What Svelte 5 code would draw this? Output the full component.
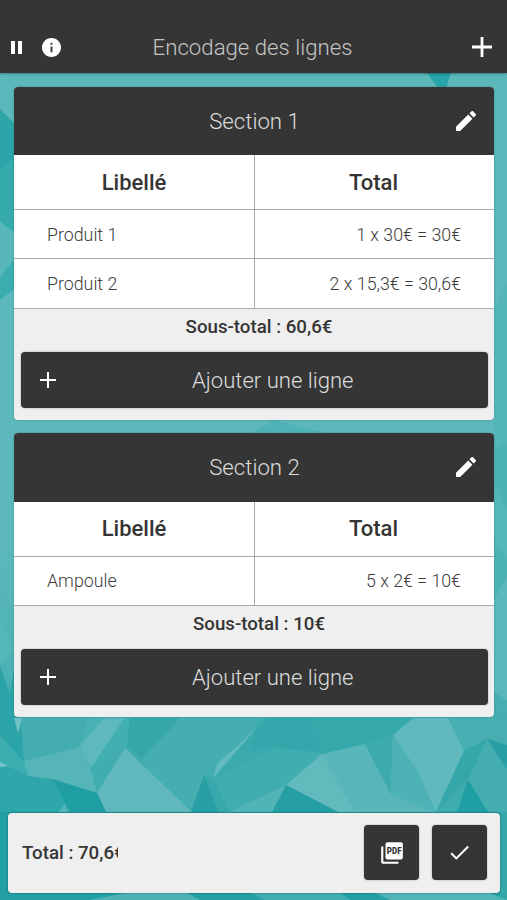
<script lang="ts">
    const sections = [
        {
            name: "Section 1",
            lines: [
                { label: "Produit 1", total: "1 x 30€ = 30€" },
                { label: "Produit 2", total: "2 x 15,3€ = 30,6€" }
            ],
            subtotal: "60,6€"
        },
        {
            name: "Section 2",
            lines: [{ label: "Ampoule", total: "5 x 2€ = 10€" }],
            subtotal: "10€"
        }
    ];

    // Low-poly facets of the page background
    const facets = [
        { points: "427,73 451,73 446,88 438,88", fill: "#27a5a9" },
        { points: "0,109 14,123 14,232 0,221", fill: "#2ca5a9" },
        { points: "0,170 14,158 14,232 0,221", fill: "#35abad" },
        { points: "0,221 14,234 14,263 0,277", fill: "#57b7ba" },
        { points: "0,277 14,260 14,289 0,300", fill: "#3badb0" },
        { points: "250,434 274,420 302,427 330,434", fill: "#4db3b6" },
        { points: "494,310 507,280 507,442 494,450", fill: "#53b5b8" },
        { points: "494,450 507,442 507,690 494,680", fill: "#4bb2b4" },
        { points: "494,480 507,510 507,560 494,540", fill: "#55b6b9" },
        { points: "494,600 507,575 507,700 494,692", fill: "#5ab8bb" },
        { points: "0,614 0,665 14,650", fill: "#55b6b9" },
        { points: "0,718 507,718 507,812 0,812", fill: "#3eacaf" },
        { points: "0,666 14,705 24,762 0,735", fill: "#2ba4a8" },
        { points: "14,668 20,718 24,762 8,705", fill: "#2ba3a7" },
        { points: "14,718 22,718 18,733", fill: "#74c1c4" },
        { points: "22,718 88,718 79,747 24,761", fill: "#43adb0" },
        { points: "88,718 115,718 79,747", fill: "#4ab2b4" },
        { points: "104,718 125,718 91,768 79,747", fill: "#5eb9bc" },
        { points: "125,718 180,718 141,759 125,748 91,768", fill: "#42afb1" },
        { points: "130,718 180,718 141,759 127,747", fill: "#35a6aa" },
        { points: "180,718 257,718 257,728 238,747 213,778 191,812 141,762", fill: "#45aeb1" },
        { points: "0,740 24,762 28,776 0,764", fill: "#3caeb1" },
        { points: "0,762 28,776 52,779 70,812 0,812", fill: "#2fa7aa" },
        { points: "0,762 8,766 0,767", fill: "#7ac5c8" },
        { points: "24,761 79,747 91,769 97,793 52,779 28,776", fill: "#55b5b8" },
        { points: "91,769 125,749 97,793", fill: "#42adb0" },
        { points: "125,748 192,812 106,812 97,793", fill: "#60b8bc" },
        { points: "52,779 97,793 106,812 70,812", fill: "#209fa3" },
        { points: "58,812 65,804 68,812", fill: "#55b6b9" },
        { points: "204,775 219,812 191,812", fill: "#289fa4" },
        { points: "255,732 318,718 322,753 278,748 213,778", fill: "#3baaae" },
        { points: "255,729 266,718 312,718 320,752 278,748 252,750", fill: "#33a7ab" },
        { points: "213,778 278,748 322,754 286,785 229,812", fill: "#40adb0" },
        { points: "213,778 204,775 219,812 229,812", fill: "#37a9ac" },
        { points: "257,727 235,748 217,764 213,778 234,754", fill: "#64bbbf" },
        { points: "313,718 369,718 410,718 393,735 365,744 322,754", fill: "#35a8ab" },
        { points: "322,754 365,744 391,794 436,812 338,812 286,785", fill: "#58b6b9" },
        { points: "322,754 355,812 338,812 286,785", fill: "#62babd" },
        { points: "365,744 393,735 391,794", fill: "#3cabae" },
        { points: "393,735 414,718 450,718 464,751 436,812 391,794", fill: "#60b9bc" },
        { points: "393,735 417,770 436,812 391,794", fill: "#4db2b5" },
        { points: "448,718 507,718 507,745 487,739 464,751", fill: "#47aeb1" },
        { points: "464,751 487,739 468,779 436,812", fill: "#35a7ab" },
        { points: "487,739 507,745 507,768 495,765", fill: "#279fa5" },
        { points: "487,739 507,770 507,812 487,812 468,780", fill: "#43adb0" },
        { points: "468,780 488,812 457,812", fill: "#1f9fa4" },
        { points: "286,785 338,812 272,812", fill: "#269fa4" },
        { points: "286,785 272,812 229,812", fill: "#50b3b6" },
        { points: "0,812 507,812 507,900 0,900", fill: "#22a0a4" },
        { points: "500,812 507,812 507,900 500,900", fill: "#34a7ab" },
        { points: "125,893 187,893 200,900 90,900", fill: "#4eb2b5" },
        { points: "250,893 340,893 350,900 265,900", fill: "#43aeb1" },
        { points: "375,893 490,893 507,900 390,900", fill: "#51b5b8" }
    ];
</script>

<div class="page">
    <svg class="backdrop" viewBox="0 0 507 900" aria-hidden="true">
        <defs>
            <linearGradient id="sea" x1="0" y1="0" x2="0" y2="1">
                <stop offset="0" stop-color="#5ab8bb" />
                <stop offset="0.6" stop-color="#5db8bc" />
                <stop offset="0.8" stop-color="#43aeb1" />
                <stop offset="1" stop-color="#2aa3a7" />
            </linearGradient>
        </defs>
        <rect width="507" height="900" fill="url(#sea)" />
        {#each facets as facet}
            <polygon points={facet.points} fill={facet.fill} />
        {/each}
    </svg>

    <header>
        <div class="status">
            <svg class="pause" viewBox="0 0 13 13"><path d="M1 0h4v13H1zM8 0h4v13H8z" /></svg>
            <svg class="info" viewBox="2 2 20 20">
                <path d="M12 2C6.48 2 2 6.48 2 12s4.48 10 10 10 10-4.48 10-10S17.52 2 12 2zm1 15h-2v-6h2v6zm0-8h-2V7h2v2z" />
            </svg>
        </div>
        <h1>Encodage des lignes</h1>
        <button class="icon-button" aria-label="Ajouter une section">
            <svg class="add" viewBox="0 0 20 20"><path d="M8.6 0h2.8v8.6H20v2.8h-8.6V20H8.6v-8.6H0V8.6h8.6z" /></svg>
        </button>
    </header>

    <main>
        {#each sections as section}
            <section>
                <div class="section-head">
                    <h2>{section.name}</h2>
                    <button class="icon-button" aria-label="Modifier">
                        <svg class="edit" viewBox="3 3 18 18">
                            <path d="M3 17.25V21h3.75L17.81 9.94l-3.75-3.75L3 17.25zM20.71 7.04c.39-.39.39-1.02 0-1.41l-2.34-2.34c-.39-.39-1.02-.39-1.41 0l-1.83 1.83 3.75 3.75 1.83-1.83z" />
                        </svg>
                    </button>
                </div>
                <div class="row titles">
                    <div class="cell">Libellé</div>
                    <div class="cell">Total</div>
                </div>
                {#each section.lines as line}
                    <div class="row">
                        <div class="cell">{line.label}</div>
                        <div class="cell amount">{line.total}</div>
                    </div>
                {/each}
                <p class="subtotal">Sous-total : {section.subtotal}</p>
                <button class="add-line">
                    <svg viewBox="0 0 16 16"><path d="M7 0h2v7h7v2H9v7H7V9H0V7h7z" /></svg>
                    <span>Ajouter une ligne</span>
                </button>
            </section>
        {/each}
    </main>

    <footer>
        <span class="total">Total : 70,6€</span>
        <div class="actions">
            <button class="square" aria-label="Exporter en PDF">
                <svg class="pdf" viewBox="0 0 24 24">
                    <path d="M4 6H2v14c0 1.1.9 2 2 2h14v-2H4z" />
                    <rect x="6" y="2" width="16" height="16" rx="2" />
                    <text x="14" y="12.7" text-anchor="middle" textLength="13.6" lengthAdjust="spacingAndGlyphs">PDF</text>
                </svg>
            </button>
            <button class="square" aria-label="Valider">
                <svg class="check" viewBox="3 5 19 14"><path d="M9 16.17 4.83 12l-1.42 1.41L9 19 21 7l-1.41-1.41z" /></svg>
            </button>
        </div>
    </footer>
</div>

<style>
    .page {
        position: relative;
        display: flex;
        flex-direction: column;
        width: 507px;
        height: 900px;
        overflow: hidden;
        box-sizing: border-box;
        padding-bottom: 7.5px;
        font-family: Roboto, sans-serif;
        color: #353535;
    }

    .backdrop {
        position: absolute;
        inset: 0;
        width: 100%;
        height: 100%;
    }

    header, main, footer {
        position: relative;
    }

    svg {
        display: block;
        fill: #fff;
    }

    button {
        border: none;
        padding: 0;
        font: inherit;
        background: none;
        cursor: pointer;
    }

    h1, h2 {
        margin: 0;
        font-size: 22.2px;
        font-weight: 300;
        color: #ddd;
        text-align: center;
        white-space: nowrap;
    }

    header {
        display: grid;
        grid-template-columns: 80px 1fr 80px;
        align-items: center;
        height: 73px;
        padding: 21px 15px 0 10px;
        box-sizing: border-box;
        background: #353535;
        box-shadow: 0 1px 2px rgba(0, 0, 0, 0.35);
    }

    header h1 {
        padding-left: 3px;
        color: #c4c4c4;
    }

    .status {
        display: flex;
        align-items: center;
        gap: 19px;
    }

    .pause {
        width: 13px;
        height: 13px;
    }

    .info {
        width: 19px;
        height: 19px;
    }

    .icon-button {
        justify-self: end;
    }

    .add {
        width: 20px;
        height: 20px;
    }

    main {
        flex: 1;
        padding: 13.5px 13px 0 14px;
    }

    section {
        margin-bottom: 13px;
        padding-bottom: 12.5px;
        border-radius: 4px;
        overflow: hidden;
        background: #efefef;
        box-shadow: 0 0 2px rgba(0, 0, 0, 0.25);
    }

    .section-head {
        display: grid;
        grid-template-columns: 60px 1fr 60px;
        align-items: center;
        height: 68.5px;
        padding: 0 18px 0 19px;
        background: #353535;
    }

    .section-head h2 {
        grid-column: 2;
    }

    .edit {
        width: 20px;
        height: 20px;
    }

    .row {
        display: grid;
        grid-template-columns: 241px 1fr;
        height: 49.3px;
        box-sizing: border-box;
        border-bottom: 1px solid #aaa;
        background: #fff;
        color: #3c3c3c;
        font-size: 17.8px;
        font-weight: 300;
    }

    .row.titles {
        height: 55px;
        color: #353535;
        font-size: 22px;
        font-weight: 500;
    }

    .cell {
        display: flex;
        align-items: center;
        padding: 0 33px;
    }

    .cell:first-child {
        border-right: 1px solid #aaa;
    }

    .titles .cell {
        justify-content: center;
    }

    .titles .cell:last-child {
        padding-right: 35px;
    }

    .amount {
        justify-content: flex-end;
    }

    .subtotal {
        margin: 0;
        padding: 7px 0 14px 10px;
        line-height: 22px;
        font-size: 18.7px;
        font-weight: 500;
        text-align: center;
    }

    .add-line {
        display: grid;
        grid-template-columns: 20px 1fr;
        align-items: center;
        width: 467px;
        height: 56px;
        margin: 0 0 0 6.5px;
        padding: 0 18px 0 19.5px;
        border-radius: 4px;
        background: #353535;
        box-shadow: 0 0 2px rgba(0, 0, 0, 0.35);
        color: #ddd;
        font-size: 22.1px;
        font-weight: 300;
    }

    .add-line svg {
        width: 16px;
        height: 16px;
    }

    .add-line span {
        padding-left: 16px;
    }

    footer {
        display: flex;
        align-items: center;
        justify-content: space-between;
        height: 80px;
        margin: 0 7px 0 8px;
        padding: 0 13px 0 14px;
        border-radius: 4px;
        background: #efefef;
        box-shadow: 0 0 2px rgba(0, 0, 0, 0.5);
    }

    /* fixed width, the currency sign runs past the edge */
    .total {
        width: 96px;
        overflow: hidden;
        white-space: nowrap;
        font-size: 18.7px;
        font-weight: 500;
    }

    .actions {
        display: flex;
        gap: 13px;
    }

    .square {
        display: flex;
        align-items: center;
        justify-content: center;
        width: 55px;
        height: 55px;
        border-radius: 4px;
        background: #353535;
        box-shadow: 0 0 2px rgba(0, 0, 0, 0.35);
    }

    .pdf {
        width: 26px;
        height: 26px;
    }

    .pdf text {
        font-size: 8.5px;
        font-weight: 900;
        fill: #353535;
    }

    .check {
        width: 20px;
        height: 15px;
    }
</style>
